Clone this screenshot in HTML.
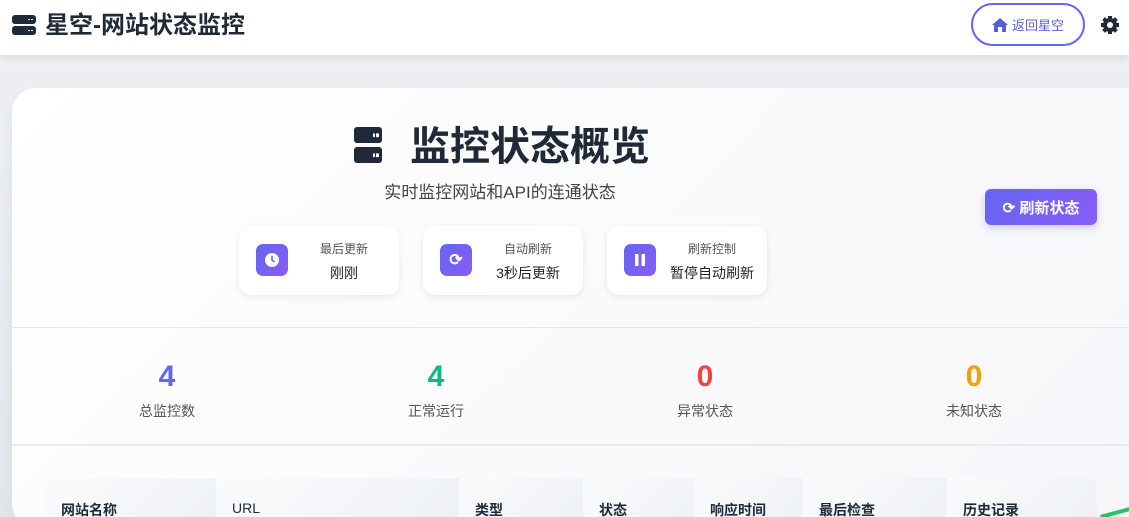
<!DOCTYPE html><html><head><meta charset="utf-8"><style>
*{margin:0;padding:0;box-sizing:border-box}
html,body{width:1129px;height:517px;overflow:hidden}
body{background:linear-gradient(180deg,#eef0f4,#e2e6ec);font-family:"Liberation Sans","Noto Sans CJK SC",sans-serif;position:relative;color:#1f2937}
.hdr{position:absolute;left:0;top:0;width:1129px;height:55px;background:#fff;box-shadow:0 2px 8px rgba(0,0,0,.1)}
.abs{position:absolute}
.srv{position:absolute;display:flex;flex-direction:column;justify-content:space-between}
.srv i{display:block;background:#1f2937;border-radius:3px;position:relative}
.srv i:before,.srv i:after{content:"";position:absolute;top:50%;width:12%;height:22%;transform:translateY(-50%);background:#fff;border-radius:1px}
.srv i:before{right:12%;width:8%}
.srv i:after{right:26%;width:8%}
.card{position:absolute;left:12px;top:88px;width:1140px;height:440px;border-radius:24px;background:linear-gradient(135deg,#fff,#f5f6f9);box-shadow:0 4px 12px rgba(0,0,0,.05)}
.info{position:absolute;top:226px;width:160px;height:69px;background:#fff;border-radius:12px;box-shadow:0 2px 8px rgba(0,0,0,.08)}
.info .ic{position:absolute;left:17px;top:18px;width:32px;height:32px;border-radius:7px;background:linear-gradient(135deg,#6366f1,#8b5cf6);color:#fff;display:flex;align-items:center;justify-content:center}
.info .t{position:absolute;left:50px;right:0;top:14px;text-align:center;font-size:12px;color:#555}
.info .v{position:absolute;left:50px;right:0;top:37px;text-align:center;font-size:14px;color:#222}
.st{position:absolute;width:200px;text-align:center;top:0}
.st b{display:block;font-size:30px;line-height:36px;margin-top:359px}
.st span{display:block;font-size:14px;color:#555;margin-top:6px}
.th{position:absolute;top:478px;height:39px;background:linear-gradient(135deg,#fafbfc,#eef1f6);font-size:14px;font-weight:bold;padding:22px 0 0 16px;color:#1f2937}
</style></head><body>
<div class="hdr"></div>
<div class="srv" style="left:12px;top:15px;width:24px;height:20px"><i style="height:9px"></i><i style="height:9px"></i></div>
<div class="abs" style="left:45px;top:11px;font-size:24px;font-weight:bold;line-height:30px">星空-网站状态监控</div>
<div class="abs" style="left:971px;top:3px;width:114px;height:43px;border:2px solid #6366f1;border-radius:22px;color:#5b5fd6;font-size:13px;display:flex;align-items:center;justify-content:center;gap:4px"><svg width="16" height="14" viewBox="0 0 16 14"><path d="M8 0L0 7h2v7h4V9h4v5h4V7h2z" fill="#5b5fd6"/></svg>返回星空</div>
<svg class="abs" style="left:1100px;top:15px" width="20" height="20" viewBox="0 0 20 20"><g fill="#1f2937"><circle cx="10" cy="10" r="7"/><g stroke="#1f2937" stroke-width="4"><path d="M10 1v18M1 10h18M3.6 3.6l12.8 12.8M16.4 3.6L3.6 16.4"/></g></g><circle cx="10" cy="10" r="3" fill="#fff"/></svg>
<div class="card"></div>
<div class="abs" style="left:12px;top:444px;width:1117px;height:2px;background:#e8eaee"></div>
<div class="srv" style="left:354px;top:127px;width:28px;height:36px"><i style="height:16px"></i><i style="height:16px"></i></div>
<div class="abs" style="left:410px;top:122px;font-size:40px;font-weight:bold;line-height:50px">监控状态概览</div>
<div class="abs" style="left:0;width:1000px;top:178px;text-align:center;font-size:17px;color:#444">实时监控网站和API的连通状态</div>
<div class="abs" style="left:985px;top:189px;width:112px;height:36px;border-radius:6px;background:linear-gradient(135deg,#6366f1,#8b5cf6);color:#fff;font-size:15px;font-weight:bold;display:flex;align-items:center;justify-content:center;gap:6px;box-shadow:0 3px 8px rgba(99,102,241,.3)">⟳ 刷新状态</div>
<div class="info" style="left:239px"><div class="ic"><svg width="14" height="14"><circle cx="7" cy="7" r="7" fill="#fff"/><path d="M7 3v4l2.5 2" stroke="#6d63f0" stroke-width="1.6" fill="none"/></svg></div><div class="t">最后更新</div><div class="v">刚刚</div></div>
<div class="info" style="left:423px"><div class="ic" style="font-size:16px;font-weight:bold">⟳</div><div class="t">自动刷新</div><div class="v">3秒后更新</div></div>
<div class="info" style="left:607px"><div class="ic"><svg width="10" height="12"><rect x="0" y="0" width="3.5" height="12" fill="#fff"/><rect x="6.5" y="0" width="3.5" height="12" fill="#fff"/></svg></div><div class="t">刷新控制</div><div class="v">暂停自动刷新</div></div>
<div class="abs" style="left:12px;top:327px;width:1117px;height:1px;background:#e5e7eb"></div>
<div class="st" style="left:67px"><b style="color:#6366f1">4</b><span>总监控数</span></div>
<div class="st" style="left:336px"><b style="color:#10b981">4</b><span>正常运行</span></div>
<div class="st" style="left:605px"><b style="color:#ef4444">0</b><span>异常状态</span></div>
<div class="st" style="left:874px"><b style="color:#f59e0b">0</b><span>未知状态</span></div>
<div class="th" style="left:45px;width:171px;border-top-left-radius:10px">网站名称</div>
<div class="th" style="left:216px;width:243px;font-weight:normal">URL</div>
<div class="th" style="left:459px;width:124px">类型</div>
<div class="th" style="left:583px;width:111px">状态</div>
<div class="th" style="left:694px;width:109px">响应时间</div>
<div class="th" style="left:803px;width:144px">最后检查</div>
<div class="th" style="left:947px;width:150px;border-top-right-radius:10px">历史记录</div>
<div class="abs" style="left:1100px;top:511px;width:30px;height:4px;background:#22c55e;transform:rotate(-15deg)"></div>
</body></html>
